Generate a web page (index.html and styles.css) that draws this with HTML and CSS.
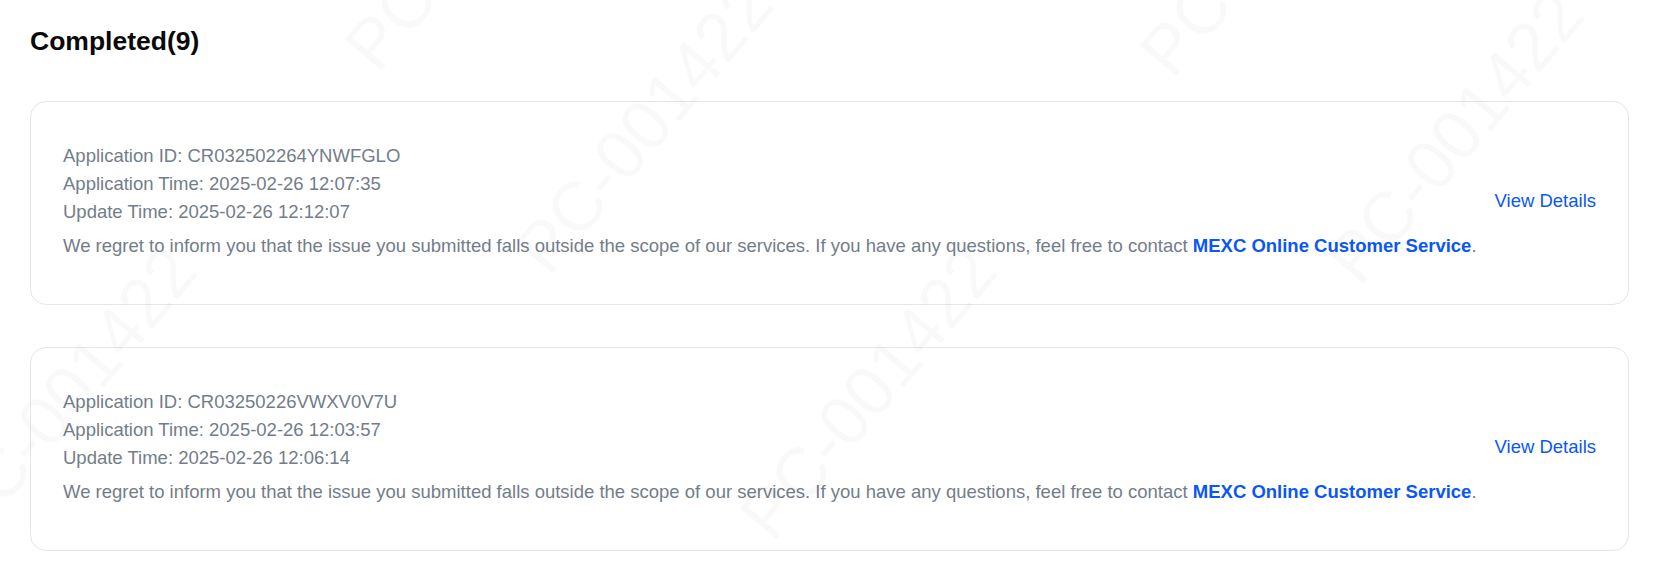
FILE: index.html
```html
<!DOCTYPE html>
<html lang="en">
<head>
  <meta charset="UTF-8" />
  <meta name="viewport" content="width=device-width, initial-scale=1.0" />
  <title>Completed Applications</title>
  <link rel="stylesheet" href="styles.css">
</head>
<body>
  <div class="page">
    <h1 class="title">Completed(9)</h1>

    <div class="list">
      <div class="card">
        <div class="info">
          <p>Application ID: CR032502264YNWFGLO</p>
          <p>Application Time: 2025-02-26 12:07:35</p>
          <p>Update Time: 2025-02-26 12:12:07</p>
          <p class="message">We regret to inform you that the issue you submitted falls outside the scope of our services. If you have any questions, feel free to contact <a href="#" class="service">MEXC Online Customer Service</a>.</p>
        </div>
        <a href="#" class="details">View Details</a>
      </div>

      <div class="card">
        <div class="info">
          <p>Application ID: CR03250226VWXV0V7U</p>
          <p>Application Time: 2025-02-26 12:03:57</p>
          <p>Update Time: 2025-02-26 12:06:14</p>
          <p class="message">We regret to inform you that the issue you submitted falls outside the scope of our services. If you have any questions, feel free to contact <a href="#" class="service">MEXC Online Customer Service</a>.</p>
        </div>
        <a href="#" class="details">View Details</a>
      </div>
    </div>
  </div>

  <!-- watermark -->
  <div class="watermark">
    <span class="wm wm1">PC-001422</span>
    <span class="wm wm2">PC-001422</span>
    <span class="wm wm3">PC-001422</span>
    <span class="wm wm4">PC-001422</span>
    <span class="wm wm5">PC-001422</span>
    <span class="wm wm6">PC-001422</span>
  </div>
</body>
</html>
```

FILE: styles.css
```css
body {
  margin: 0;
  font-family: "Liberation Sans", Arial, sans-serif;
  background: #fff;
  color: #111;
}
.page {
  padding: 26px 43px 0 30px;
}
.title {
  margin: 0 0 45px;
  font-size: 26.5px;
  line-height: 30px;
  font-weight: bold;
  color: #0a0a0a;
}
.list {
  display: flex;
  flex-direction: column;
  gap: 42px;
}
.card {
  display: flex;
  align-items: center;
  justify-content: space-between;
  border: 1px solid #e5e6e8;
  border-radius: 16px;
  padding: 40px 32px 44px;
}
.info p {
  margin: 0;
  font-size: 18.5px;
  line-height: 28px;
  color: #737d89;
}
.info .message {
  margin-top: 6px;
}
.service {
  color: #0b57f5;
  font-weight: bold;
  text-decoration: none;
}
.details {
  color: #0b57f5;
  font-size: 18.5px;
  text-decoration: none;
  white-space: nowrap;
}
.watermark {
  position: absolute;
  top: 0;
  left: 0;
  width: 100%;
  height: 576px;
  overflow: hidden;
  pointer-events: none;
}
.wm {
  position: absolute;
  font-size: 70px;
  line-height: 80px;
  color: rgba(0, 0, 0, 0.022);
  transform: rotate(-50deg);
  transform-origin: left bottom;
  white-space: nowrap;
}
.wm1 { left: 390px; top: 5px; }
.wm2 { left: 1185px; top: 11px; }
.wm3 { left: 561px; top: 208px; }
.wm4 { left: 1372px; top: 218px; }
.wm5 { left: 785px; top: 474px; }
.wm6 { left: -15px; top: 474px; }
```
